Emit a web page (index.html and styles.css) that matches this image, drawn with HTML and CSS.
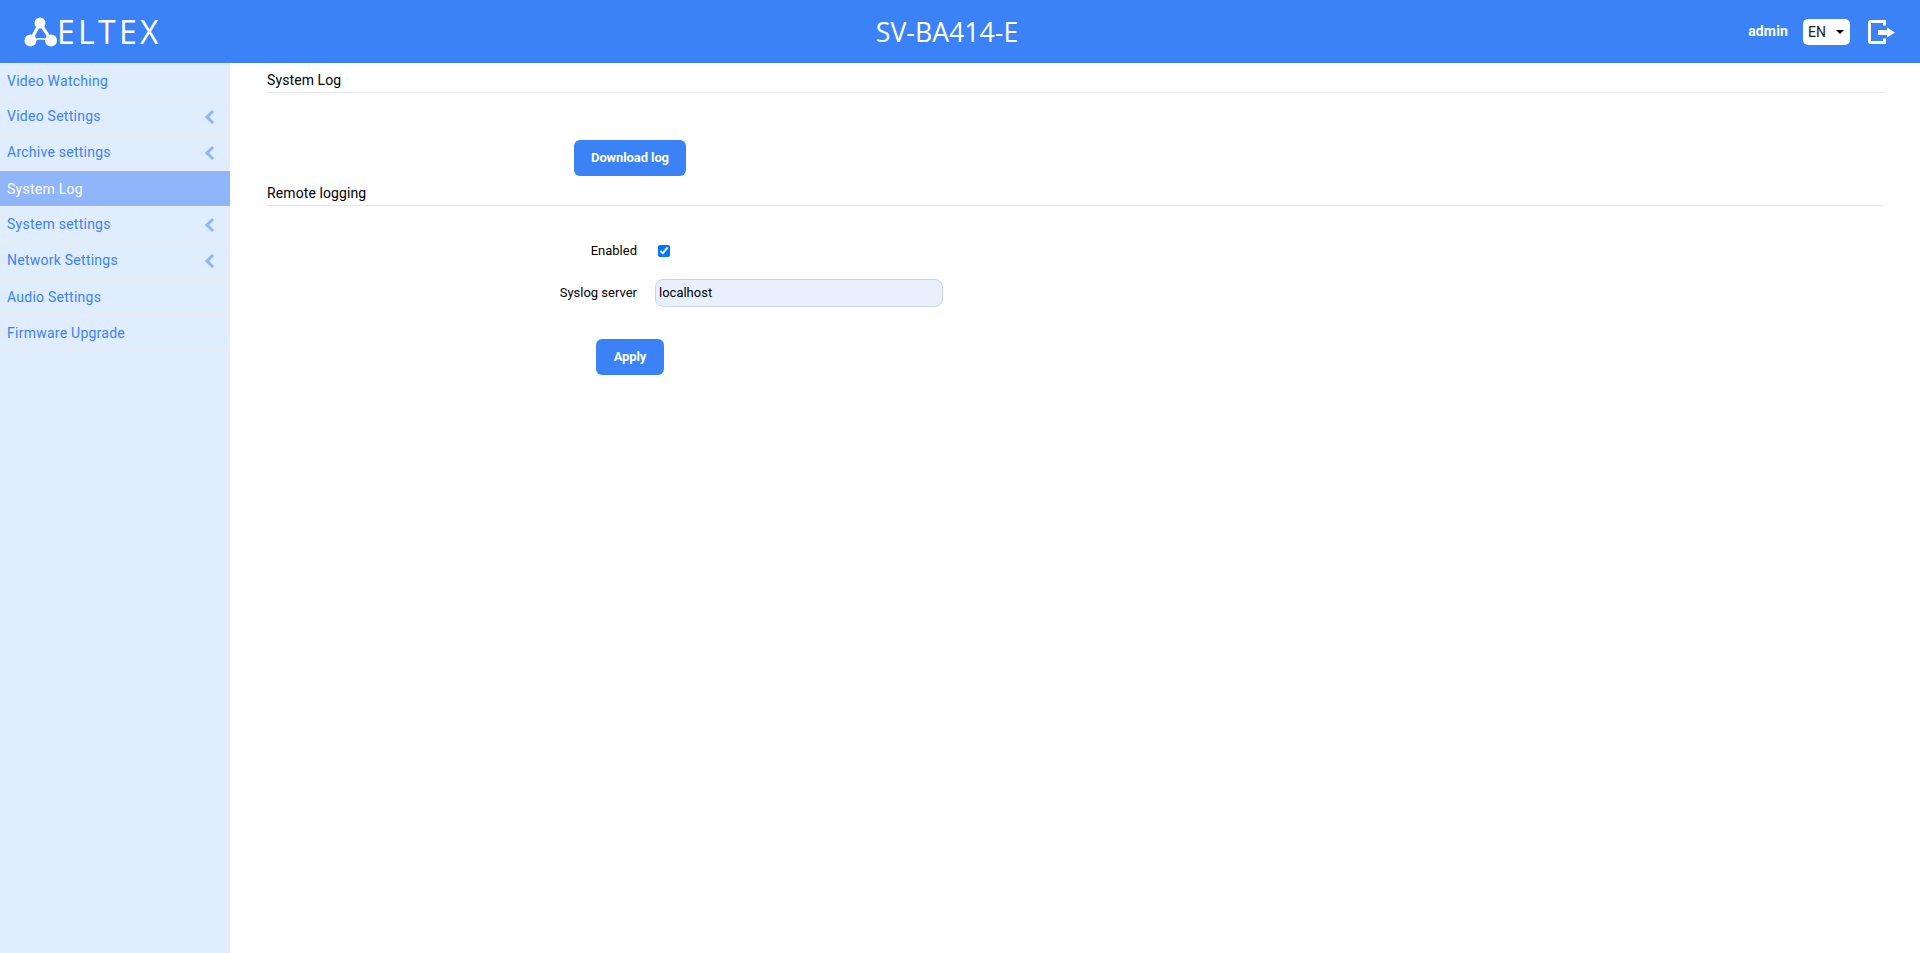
FILE: index.html
```html
<!DOCTYPE html>
<html>
<head>
  <title>SV-BA414-E</title>
  <link rel="stylesheet" href="styles.css">
</head>
<body>
<header class="topbar">
  <div class="logo">
    <svg class="logo-icon" width="33" height="32" viewBox="0 0 33 32">
      <path d="M16 7 L7 24 M16 7 L27 24" fill="none" stroke="#fff" stroke-width="3.200"/>
      <path d="M7 24.500 Q17 21 27 24.500" fill="none" stroke="#fff" stroke-width="1.500"/>
      <circle cx="16" cy="7" r="5.500" fill="#fff"/>
      <circle cx="6.500" cy="24.500" r="6" fill="#fff"/>
      <circle cx="27" cy="24.500" r="6" fill="#fff"/>
    </svg>
    <span class="logo-text">ELTEX</span>
  </div>
  <div class="device-name">SV-BA414-E</div>
  <div class="user-box">
    <span class="user-name">admin</span>
    <div class="lang-select"><span>EN</span><i class="caret"></i></div>
    <svg class="logout" width="28" height="28" viewBox="0 0 28 28">
      <path d="M17.500 7.500 V3.500 H4 Q2.500 3.500 2.500 5 V23 Q2.500 24.500 4 24.500 H17.500 V20.500" fill="none" stroke="#fff" stroke-width="3"/>
      <path d="M11 12 H20 V9.500 L28 14.500 L20 19.500 V17 H11 Z" fill="#fff"/>
    </svg>
  </div>
</header>
<div class="layout">
  <nav class="sidebar">
    <a class="nav-item">Video Watching</a>
    <a class="nav-item has-sub">Video Settings</a>
    <a class="nav-item has-sub">Archive settings</a>
    <a class="nav-item active">System Log</a>
    <a class="nav-item has-sub">System settings</a>
    <a class="nav-item has-sub">Network Settings</a>
    <a class="nav-item">Audio Settings</a>
    <a class="nav-item">Firmware Upgrade</a>
  </nav>
  <main class="content">
    <h2 class="section-title">System Log</h2>
    <div class="button-row first-row"><button class="btn btn-wide">Download log</button></div>
    <h2 class="section-title">Remote logging</h2>
    <form class="form">
      <div class="form-row check-row">
        <label for="enabled">Enabled</label>
        <input type="checkbox" id="enabled" checked>
      </div>
      <div class="form-row">
        <label for="server">Syslog server</label>
        <input type="text" id="server" value="localhost">
      </div>
      <div class="button-row"><button type="button" class="btn">Apply</button></div>
    </form>
  </main>
</div>
</body>
</html>
```

FILE: styles.css
```css
* {
  box-sizing: border-box;
}

body {
  margin: 0;
  height: 953px;
  overflow: hidden;
  font-family: Roboto, sans-serif;
  font-size: 14px;
  color: #000;
  background-color: #fff;
}

.topbar {
  display: flex;
  align-items: center;
  height: 63px;
  background-color: #3b82f6;
  color: #fff;
  position: relative;
}

.logo {
  display: flex;
  align-items: center;
  padding-left: 24px;
}

.logo-text {
  font-family: "Open Sans", sans-serif;
  font-size: 32px;
  font-weight: 400;
  letter-spacing: 3.300px;
  line-height: 32px;
}

.device-name {
  position: absolute;
  left: 0;
  right: 26px;
  top: 15px;
  text-align: center;
  font-family: "Open Sans", sans-serif;
  font-size: 26.700px;
  line-height: 33px;
}

.user-box {
  display: flex;
  align-items: center;
  margin-left: auto;
  padding-right: 25px;
}

.user-name {
  font-weight: 700;
  font-size: 14px;
  letter-spacing: 0.150px;
  margin-right: 15px;
  margin-bottom: 2px;
}

.lang-select {
  display: flex;
  align-items: center;
  justify-content: space-between;
  width: 47px;
  height: 26px;
  padding: 0 6px 0 5px;
  background-color: #fff;
  border-radius: 5px;
  color: #222;
  font-size: 14px;
  margin-right: 17px;
}

.caret {
  width: 0;
  height: 0;
  border-left: 4px solid transparent;
  border-right: 4px solid transparent;
  border-top: 4px solid #000;
}

.logout {
  display: block;
}

.layout {
  display: flex;
  height: 890px;
}

.sidebar {
  width: 230px;
  flex-shrink: 0;
  background-color: #e0edff;
}

.nav-item {
  display: block;
  height: 36px;
  line-height: 36px;
  padding-left: 7px;
  border-bottom: 1px solid #e9ecf1;
  color: #3b82f6;
  font-size: 14px;
  letter-spacing: 0.250px;
  position: relative;
}

.nav-item.has-sub {
  line-height: 35px;
}

.nav-item.active {
  background-color: #8fb6fb;
  color: #fff;
}

.nav-item.has-sub::after {
  content: "";
  position: absolute;
  right: 13px;
  top: 13px;
  width: 7px;
  height: 7px;
  border-left: 3px solid #8fb6fb;
  border-bottom: 3px solid #8fb6fb;
  transform: rotate(45deg);
}

.content {
  flex: 1;
  padding: 0 36px 0 37px;
}

.section-title {
  margin: 0;
  height: 30px;
  line-height: 34px;
  font-size: 14px;
  font-weight: 400;
  letter-spacing: 0.100px;
  border-bottom: 1px solid #e5e7eb;
}

.button-row {
  display: flex;
  justify-content: center;
  width: 726px;
}

.first-row {
  margin-top: 47px;
}

.btn {
  height: 36px;
  width: 68px;
  padding: 0 0 2px;
  border: 0;
  border-radius: 6px;
  background-color: #3b82f6;
  color: #fff;
  font-family: Roboto, sans-serif;
  font-size: 13px;
  font-weight: 700;
  letter-spacing: -0.100px;
}

.btn-wide {
  width: 112px;
}

.form {
  padding-top: 31px;
}

.form-row {
  display: flex;
  align-items: center;
  height: 28px;
  margin-bottom: 14px;
}

.form-row label {
  width: 370px;
  padding-bottom: 2px;
  text-align: right;
  font-size: 13px;
}

.form-row input[type="text"] {
  width: 288px;
  height: 28px;
  margin-left: 18px;
  padding: 0 3px 1px;
  border: 1px solid #cbd5e1;
  border-radius: 8px;
  background-color: #e8f0fe;
  font-family: Roboto, sans-serif;
  font-size: 13px;
}

.form-row input[type="checkbox"] {
  width: 12px;
  height: 12px;
  margin: 0 0 1px 21px;
}

.form .button-row {
  margin-top: 32px;
}
```
